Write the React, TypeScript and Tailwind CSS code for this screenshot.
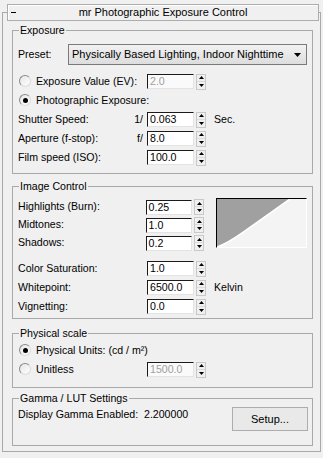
import React from "react";

const Spinner = () => (
  <div className="ml-[2px] flex h-[16px] w-[10px] flex-col border border-[#c8c8c8] bg-[#f0f0f0]">
    <div className="flex h-1/2 items-center justify-center border-b border-[#dcdcdc]">
      <svg width="5" height="3" viewBox="0 0 5 3">
        <path d="M2.5 0 L5 3 L0 3 Z" fill="#000" />
      </svg>
    </div>
    <div className="flex h-1/2 items-center justify-center">
      <svg width="5" height="3" viewBox="0 0 5 3">
        <path d="M0 0 L5 0 L2.5 3 Z" fill="#000" />
      </svg>
    </div>
  </div>
);

const NumInput = ({ value, disabled }: { value: string; disabled?: boolean }) => (
  <>
    <div
      className={`flex h-[15px] w-[47px] items-center border-t border-l border-t-[#1a1a1a] border-l-[#1a1a1a] border-r border-b border-r-[#e3e3e3] border-b-[#e3e3e3] pl-[2px] leading-none ${
        disabled ? "bg-[#fafafa] text-[#a0a0a0]" : "bg-white text-black"
      }`}
    >
      {value}
    </div>
    <Spinner />
  </>
);

const Radio = ({ checked }: { checked?: boolean }) => (
  <div className="flex h-[12px] w-[12px] items-center justify-center rounded-full border border-t-[#8a8a8a] border-l-[#8a8a8a] border-r-[#dcdcdc] border-b-[#dcdcdc] bg-gradient-to-br from-[#e6e6e6] to-white">
    {checked && <div className="h-[5px] w-[5px] rounded-full bg-black" />}
  </div>
);

// label + optional prefix + spinner field + optional suffix
const Row = ({
  label,
  prefix,
  value,
  suffix,
  h = "h-[19px]",
  radio,
  checked,
  disabled,
}: {
  label: string;
  prefix?: string;
  value?: string;
  suffix?: string;
  h?: string;
  radio?: boolean;
  checked?: boolean;
  disabled?: boolean;
}) => (
  <div className={`flex ${h} items-center`}>
    <div className="flex w-[129px] items-center">
      {radio ? (
        <div className="flex items-center pl-[1px]">
          <Radio checked={checked} />
          <span className="ml-[5px] whitespace-nowrap">{label}</span>
        </div>
      ) : (
        <span className="whitespace-nowrap">{label}</span>
      )}
      {prefix && <span className="ml-auto pr-[4px]">{prefix}</span>}
    </div>
    {value !== undefined && <NumInput value={value} disabled={disabled} />}
    {suffix && <span className="ml-[8px]">{suffix}</span>}
  </div>
);

const Group = ({
  title,
  className,
  children,
}: {
  title: string;
  className: string;
  children: React.ReactNode;
}) => (
  <div className={`relative border border-[#a9a9a9] pl-[5px] ${className}`}>
    <span className="absolute -top-[7px] left-[6px] bg-[#f0f0f0] px-[1px] leading-[13px]">{title}</span>
    {children}
  </div>
);

const Curve = () => (
  <div className="ml-[12px] h-[50px] w-[91px] border-t border-l border-t-black border-l-black border-r border-b border-r-white border-b-white bg-[#f4f4f4]">
    <svg width="89" height="48" viewBox="0 0 89 48" className="block">
      <path d="M0 0 L73 0 L28 32 C18 39 10 45 0 48 Z" fill="#a0a0a0" />
      <path d="M73 0 L28 32 C18 39 10 45 0 48" stroke="#fff" strokeWidth="1.6" fill="none" />
    </svg>
  </div>
);

export default function App() {
  return (
    <div className="h-[458px] w-[323px] bg-[#f0f0f0] pt-[12px] pl-[2px] font-['Liberation_Sans',Arial,sans-serif] text-[10.6px] text-black">
      <div className="h-[440px] w-[319px] border border-[#a9a9a9]">
        {/* Rollout title */}
        <div className="-mt-[9px] mr-[1px] ml-[4px] flex h-[17px] items-center border border-[#adadad] bg-[#f0f0f0] shadow-[inset_1px_1px_0_#fff]">
          <div className="ml-[3px] h-[1px] w-[5px] bg-black" />
          <span className="flex-1 pr-[8px] text-center text-[11px]">mr Photographic Exposure Control</span>
        </div>

        <div className="ml-[9px] flex w-[301px] flex-col">
          <Group title="Exposure" className="mt-[9px] h-[144px]">
            <div className="mt-[13px] flex h-[21px] items-center">
              <span className="w-[50px]">Preset:</span>
              <div className="flex h-[21px] w-[239px] items-center border border-[#7a7a7a] bg-gradient-to-b from-[#f2f2f2] to-[#dddddd] pl-[3px] pr-[5px]">
                <span className="text-[11px] whitespace-nowrap">Physically Based Lighting, Indoor Nighttime</span>
                <svg width="7" height="4" viewBox="0 0 7 4" className="ml-auto">
                  <path d="M0 0 L7 0 L3.5 4 Z" fill="#000" />
                </svg>
              </div>
            </div>
            <div className="mt-[7px]">
              <Row label="Exposure Value (EV):" radio value="2.0" disabled />
              <Row label="Photographic Exposure:" radio checked />
              <Row label="Shutter Speed:" prefix="1/" value="0.063" suffix="Sec." />
              <Row label="Aperture (f-stop):" prefix="f/" value="8.0" />
              <Row label="Film speed (ISO):" value="100.0" />
            </div>
          </Group>

          <Group title="Image Control" className="mt-[12px] h-[133px]">
            <div className="mt-[11px] flex">
              <div className="w-[186px]">
                <Row h="h-[18px]" label="Highlights (Burn):" value="0.25" />
                <Row h="h-[18px]" label="Midtones:" value="1.0" />
                <Row h="h-[18px]" label="Shadows:" value="0.2" />
              </div>
              <Curve />
            </div>
            <div className="mt-[7px]">
              <Row label="Color Saturation:" value="1.0" />
              <Row label="Whitepoint:" value="6500.0" suffix="Kelvin" />
              <Row label="Vignetting:" value="0.0" />
            </div>
          </Group>

          <Group title="Physical scale" className="mt-[14px] h-[55px]">
            <div className="mt-[7px]">
              <Row label="Physical Units: (cd / m²)" radio checked />
              <Row label="Unitless" radio value="1500.0" disabled />
            </div>
          </Group>

          <Group title="Gamma / LUT Settings" className="mt-[10px] h-[48px]">
            <div className="mt-[7px] flex items-start justify-between pr-[4px]">
              <span className="flex h-[18px] items-center whitespace-pre">Display Gamma Enabled:  2.200000</span>
              <button className="mt-[1px] flex h-[24px] w-[76px] items-center justify-center border border-[#adadad] bg-[#e9e9e9] text-[11px]">
                Setup...
              </button>
            </div>
          </Group>
        </div>
      </div>
    </div>
  );
}
